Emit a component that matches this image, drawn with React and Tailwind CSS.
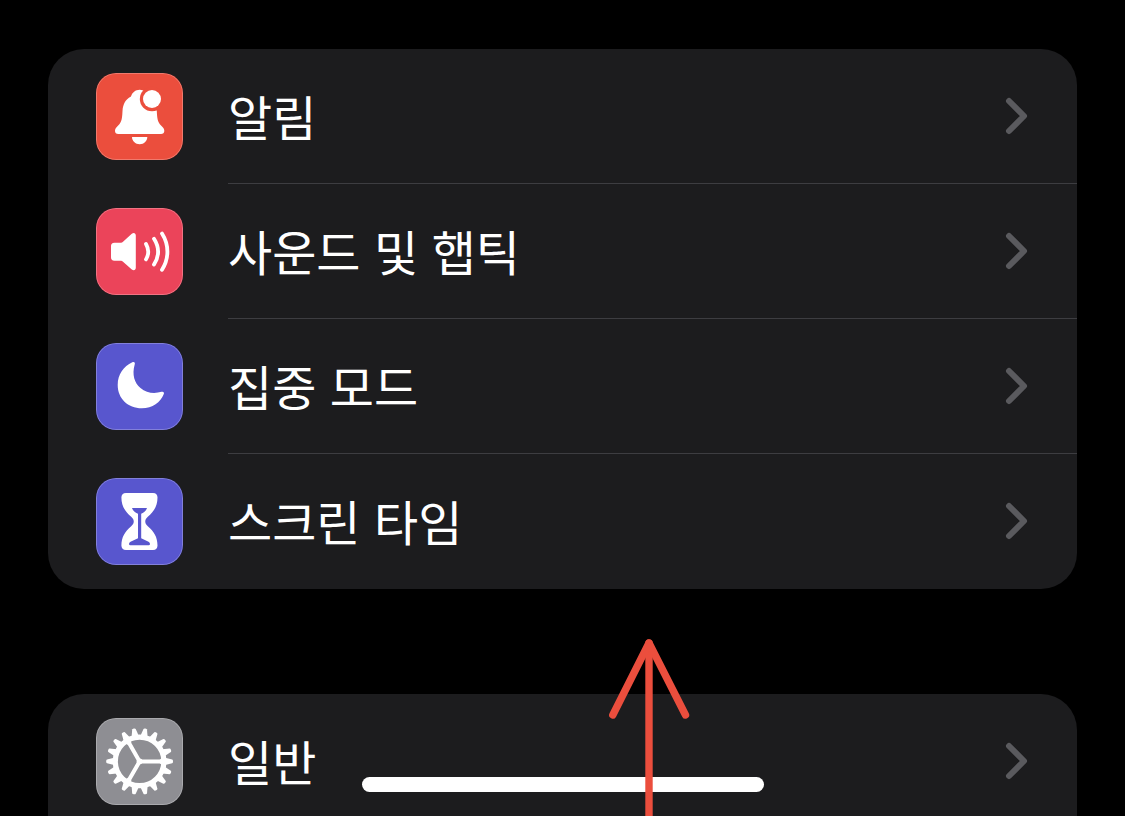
function BellIcon() {
  return (
    <svg viewBox="0 0 87 87" className="w-full h-full" fill="white" aria-hidden="true">
      <path d="M43.7 16.7C39.5 16.7 36 19.5 35 23.6C29 27 27 31.5 26.5 38C26.1 48 25 50 20.8 54C19.4 55.4 19 56.6 19 58C19 60 20.3 61 22.3 61H65C67 61 68.3 60 68.3 58C68.3 56.6 67.9 55.4 66.5 54C62.3 50 61.2 48 60.8 38C60.3 31.5 58.3 27 52.3 23.6C51.3 19.5 47.9 16.7 43.7 16.7Z" />
      <path d="M36 64H51.3C51.3 68 48 71.2 43.7 71.2C39.3 71.2 36 68 36 64Z" />
      <circle cx="56" cy="26" r="12.2" fill="#eb4e3d" />
      <circle cx="56" cy="26" r="9" />
    </svg>
  );
}

function SpeakerIcon() {
  return (
    <svg viewBox="0 0 87 87" className="w-full h-full" fill="white" aria-hidden="true">
      <path d="M18.5 34.7H24.5C25.6 34.7 26.2 34.4 27 33.7L35.8 25.8C37.6 24.3 39.8 25 39.8 27.5V59.8C39.8 62.3 37.6 63 35.8 61.5L27 53.7C26.2 53 25.6 52.7 24.5 52.7H18.5C16 52.7 15 51.4 15 49.3V38.1C15 36 16 34.7 18.5 34.7Z" />
      <g fill="none" stroke="white" strokeWidth="3.8" strokeLinecap="round">
        <path d="M50 36C52.9 41 52.9 46.4 50 51.4" />
        <path d="M58 30.8C63.2 39 63.2 48.4 58 56.6" />
        <path d="M66 25.6C73.2 37 73.2 50.4 66 61.8" />
      </g>
    </svg>
  );
}

function MoonIcon() {
  return (
    <svg viewBox="0 0 87 87" className="w-full h-full" fill="white" aria-hidden="true">
      <path d="M36.3 19.3C38.2 18.4 39.4 19.6 38.7 21.4C35.8 31.5 38.5 40 44.5 45C50.5 50.2 58.5 51 65.5 48.8C67.3 48.2 68.5 49.2 67.8 51C64.5 59.5 56.5 65.3 45.8 65.3C31.8 65.3 21.7 55.5 21.7 42C21.7 31.5 27.5 23.2 36.3 19.3Z" />
    </svg>
  );
}

function HourglassIcon() {
  return (
    <svg viewBox="0 0 87 87" className="w-full h-full" fill="white" aria-hidden="true">
      <path d="M30 15H57C60 15 61.5 16.8 61.5 19.5C61.5 28 58 33.5 51.8 38.8C48.4 41.8 48.4 45.2 51.8 48.2C58 53.5 61.5 59 61.5 67.5C61.5 70.2 60 72 57 72H30C27 72 25.4 70.2 25.4 67.5C25.4 59 29 53.5 35.2 48.2C38.6 45.2 38.6 41.8 35.2 38.8C29 33.5 25.4 28 25.4 19.5C25.4 16.8 27 15 30 15Z" />
      <path
        d="M36 30H51C50 33 48 34.5 45.2 35.8V60.3L52.5 63.8Q54 64.6 54 66Q54 67.3 52.6 67.3H34.4Q33 67.3 33 66Q33 64.6 34.5 63.8L42 60.3V35.8C39 34.5 37 33 36 30Z"
        fill="#5856ce"
      />
    </svg>
  );
}

const TEETH = Array.from({ length: 18 }, (_, i) => i * 20);
const SPOKES = [0, 120, 240];

function GearIcon() {
  return (
    <svg viewBox="0 0 87 87" className="w-full h-full" fill="white" aria-hidden="true">
      <g transform="translate(43.6 43.4)">
        <circle r="24.3" fill="none" stroke="white" strokeWidth="5.2" />
        {TEETH.map(angle => (
          <path key={angle} d="M25.5 -3.6L32.6 -1.8Q33.4 -1.5 33.4 0Q33.4 1.5 32.6 1.8L25.5 3.6Z" transform={`rotate(${angle})`} />
        ))}
        {SPOKES.map(angle => (
          <path key={angle} d="M0 -2H20L23 -3.5V3.5L20 2H0Z" transform={`rotate(${angle})`} />
        ))}
        <circle r="3" />
      </g>
    </svg>
  );
}

const groups = [
  [
    { label: '알림', icon: BellIcon, color: 'bg-[#eb4e3d]' },
    { label: '사운드 및 햅틱', icon: SpeakerIcon, color: 'bg-[#eb445a]' },
    { label: '집중 모드', icon: MoonIcon, color: 'bg-[#5856ce]' },
    { label: '스크린 타임', icon: HourglassIcon, color: 'bg-[#5856ce]' },
  ],
  [{ label: '일반', icon: GearIcon, color: 'bg-[#8e8e93]' }],
];

function SettingsRow({ item, last }) {
  const Icon = item.icon;

  return (
    <li>
      <button type="button" className="flex w-full items-center gap-[45px] pl-12 text-left">
        <span className={`relative h-[87px] w-[87px] shrink-0 overflow-hidden rounded-[20px] ${item.color}`}>
          <Icon />
          <span className="absolute inset-0 rounded-[20px] border border-white/25" />
        </span>
        <span className={`flex h-[135px] flex-1 items-center justify-between border-b pr-12 ${last ? 'border-transparent' : 'border-[#3d3d41]'}`}>
          <span className="pt-1.5 text-5xl text-white">{item.label}</span>
          <svg
            viewBox="0 0 24 40"
            className="h-10 w-6 text-[#5a5a5e]"
            fill="none"
            stroke="currentColor"
            strokeWidth="6"
            strokeLinecap="round"
            strokeLinejoin="round"
            aria-hidden="true"
          >
            <path d="M4 5L19 20L4 35" />
          </svg>
        </span>
      </button>
    </li>
  );
}

export default function App() {
  return (
    <div className="relative h-screen overflow-hidden bg-black font-['Inter','Noto_Sans_CJK_KR',sans-serif]">
      <main className="flex flex-col gap-[105px] px-12 pt-[49px]">
        {groups.map((items, index) => (
          <ul key={index} className="overflow-hidden rounded-[36px] bg-[#1c1c1e] last:rounded-b-none">
            {items.map((item, i) => (
              <SettingsRow key={item.label} item={item} last={i === items.length - 1} />
            ))}
          </ul>
        ))}
      </main>

      {/* Home indicator */}
      <div className="absolute bottom-6 left-1/2 h-[15px] w-[402px] -translate-x-1/2 rounded-full bg-white" />

      {/* Swipe up arrow */}
      <svg
        viewBox="0 0 84 180"
        className="absolute bottom-0 left-1/2 ml-11 h-[180px] w-[84px]"
        fill="none"
        stroke="#eb4e3d"
        strokeWidth="7.4"
        strokeLinecap="round"
        strokeLinejoin="round"
        aria-hidden="true"
      >
        <path d="M42 190V7" />
        <path d="M5.8 79L42 7L78.5 79" />
      </svg>
    </div>
  );
}
